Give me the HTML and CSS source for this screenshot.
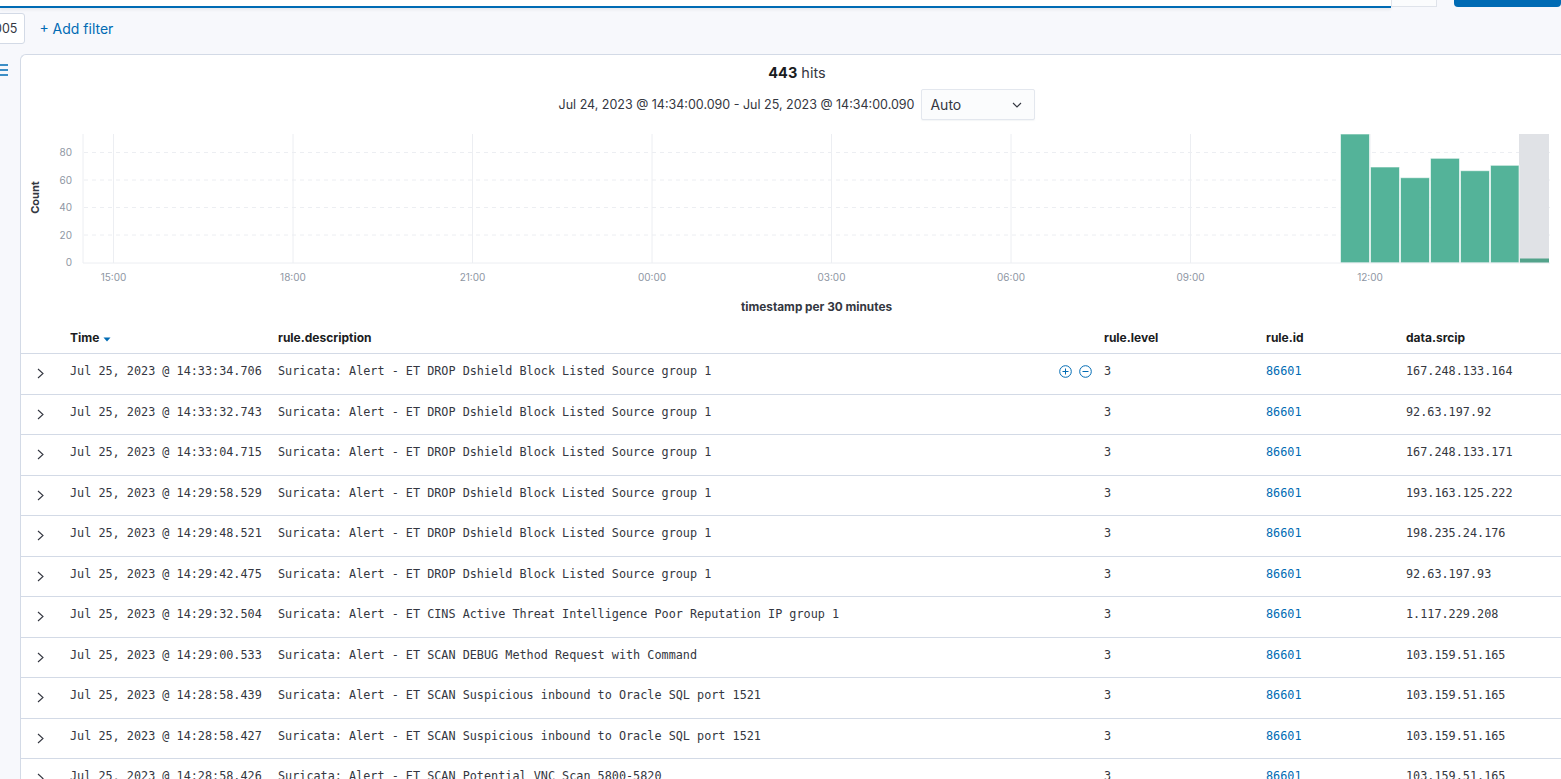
FILE: index.html
```html
<!DOCTYPE html>
<html lang="en">
<head>
<meta charset="utf-8">
<title>Discover</title>
<link rel="stylesheet" href="styles.css">
</head>
<body>
<div class="topbar">
  <div class="query"></div>
  <div class="qbtn"></div>
  <div class="update"></div>
</div>
<div class="filters">
  <span class="pill">005</span>
  <span class="add">+ Add filter</span>
</div>
<div class="main">
  <div class="gutter">
    <svg class="burger" width="8" height="12" viewBox="0 0 8 12"><path d="M0 1h8M0 6h8M0 11h8" stroke="#006bb4" stroke-width="1.3"/></svg>
  </div>
  <div class="panel">
    <div class="hits"><b>443</b> hits</div>
    <div class="range">
      <span class="range-text">Jul 24, 2023 @ 14:34:00.090 - Jul 25, 2023 @ 14:34:00.090</span>
      <div class="select"><span>Auto</span><svg width="10" height="6" viewBox="0 0 10 6"><path d="M1 1l4 4 4-4" fill="none" stroke="#343741" stroke-width="1.1"/></svg></div>
    </div>
    <svg class="chart" width="1552" height="200" viewBox="21 120 1552 200">
      <g stroke="#eceef2" stroke-width="1">
        <line x1="113.5" y1="134" x2="113.5" y2="263"/>
        <line x1="293" y1="134" x2="293" y2="263"/>
        <line x1="472.5" y1="134" x2="472.5" y2="263"/>
        <line x1="652" y1="134" x2="652" y2="263"/>
        <line x1="831.5" y1="134" x2="831.5" y2="263"/>
        <line x1="1011" y1="134" x2="1011" y2="263"/>
        <line x1="1190.5" y1="134" x2="1190.5" y2="263"/>
        <line x1="1370" y1="134" x2="1370" y2="263"/>
      </g>
      <g stroke="#eceef2" stroke-width="1" stroke-dasharray="4 4">
        <line x1="84" y1="152.5" x2="1550" y2="152.5"/>
        <line x1="84" y1="180" x2="1550" y2="180"/>
        <line x1="84" y1="207.5" x2="1550" y2="207.5"/>
        <line x1="84" y1="235" x2="1550" y2="235"/>
      </g>
      <line x1="83" y1="134" x2="83" y2="263" stroke="#eceef2"/>
      <rect x="1519" y="134" width="30" height="129" fill="#e0e2e6"/>
      <g fill="#54b399" stroke="#ffffff" stroke-opacity="0.6" stroke-width="1">
        <rect x="1340.5" y="134" width="29" height="129"/>
        <rect x="1370.5" y="167" width="29" height="96"/>
        <rect x="1400.5" y="177.7" width="29" height="85.3"/>
        <rect x="1430.5" y="158.3" width="29" height="104.7"/>
        <rect x="1460.5" y="170.7" width="29" height="92.3"/>
        <rect x="1490.5" y="165.3" width="28.5" height="97.7"/>
      </g>
      <rect x="1520" y="258.5" width="29" height="4.5" fill="#53a38b"/>
      <line x1="83" y1="263" x2="1550" y2="263" stroke="#eceef2"/>
      <g class="tick" text-anchor="end">
        <text x="72" y="156">80</text>
        <text x="72" y="183.5">60</text>
        <text x="72" y="211">40</text>
        <text x="72" y="238.5">20</text>
        <text x="72" y="266">0</text>
      </g>
      <g class="tick" text-anchor="middle">
        <text x="113.5" y="281">15:00</text>
        <text x="293" y="281">18:00</text>
        <text x="472.5" y="281">21:00</text>
        <text x="652" y="281">00:00</text>
        <text x="831.5" y="281">03:00</text>
        <text x="1011" y="281">06:00</text>
        <text x="1190.5" y="281">09:00</text>
        <text x="1370" y="281">12:00</text>
      </g>
      <text class="axis-title" x="39" y="197.5" text-anchor="middle" transform="rotate(-90 39 197.5)">Count</text>
      <text class="axis-title wide" x="816.5" y="311" text-anchor="middle">timestamp per 30 minutes</text>
    </svg>
    <div class="table">
      <div class="row head">
        <div class="cell"></div>
        <div class="cell">Time <svg class="sort" width="8" height="5" viewBox="0 0 8 5"><path d="M0.5 0.5h7L4 4.5z" fill="#006bb4"/></svg></div>
        <div class="cell">rule.description</div>
        <div class="cell">rule.level</div>
        <div class="cell">rule.id</div>
        <div class="cell">data.srcip</div>
      </div>
      <div class="row">
        <div class="cell toggle"><svg width="7" height="11" viewBox="0 0 7 11"><path d="M1 1l5 4.5L1 10" fill="none" stroke="#343741" stroke-width="1.1"/></svg></div>
        <div class="cell mono">Jul 25, 2023 @ 14:33:34.706</div>
        <div class="cell mono desc"><span>Suricata: Alert - ET DROP Dshield Block Listed Source group 1</span>
          <span class="actions">
            <svg width="13" height="13" viewBox="0 0 13 13"><circle cx="6.5" cy="6.5" r="5.8" fill="none" stroke="#006bb4" stroke-width="1"/><path d="M6.5 3.5v6M3.5 6.5h6" stroke="#006bb4" stroke-width="1"/></svg>
            <svg width="13" height="13" viewBox="0 0 13 13"><circle cx="6.5" cy="6.5" r="5.8" fill="none" stroke="#006bb4" stroke-width="1"/><path d="M3.5 6.5h6" stroke="#006bb4" stroke-width="1"/></svg>
          </span>
        </div>
        <div class="cell mono">3</div>
        <div class="cell mono link">86601</div>
        <div class="cell mono">167.248.133.164</div>
      </div>
      <div class="row">
        <div class="cell toggle"><svg width="7" height="11" viewBox="0 0 7 11"><path d="M1 1l5 4.5L1 10" fill="none" stroke="#343741" stroke-width="1.1"/></svg></div>
        <div class="cell mono">Jul 25, 2023 @ 14:33:32.743</div>
        <div class="cell mono">Suricata: Alert - ET DROP Dshield Block Listed Source group 1</div>
        <div class="cell mono">3</div>
        <div class="cell mono link">86601</div>
        <div class="cell mono">92.63.197.92</div>
      </div>
      <div class="row">
        <div class="cell toggle"><svg width="7" height="11" viewBox="0 0 7 11"><path d="M1 1l5 4.5L1 10" fill="none" stroke="#343741" stroke-width="1.1"/></svg></div>
        <div class="cell mono">Jul 25, 2023 @ 14:33:04.715</div>
        <div class="cell mono">Suricata: Alert - ET DROP Dshield Block Listed Source group 1</div>
        <div class="cell mono">3</div>
        <div class="cell mono link">86601</div>
        <div class="cell mono">167.248.133.171</div>
      </div>
      <div class="row">
        <div class="cell toggle"><svg width="7" height="11" viewBox="0 0 7 11"><path d="M1 1l5 4.5L1 10" fill="none" stroke="#343741" stroke-width="1.1"/></svg></div>
        <div class="cell mono">Jul 25, 2023 @ 14:29:58.529</div>
        <div class="cell mono">Suricata: Alert - ET DROP Dshield Block Listed Source group 1</div>
        <div class="cell mono">3</div>
        <div class="cell mono link">86601</div>
        <div class="cell mono">193.163.125.222</div>
      </div>
      <div class="row">
        <div class="cell toggle"><svg width="7" height="11" viewBox="0 0 7 11"><path d="M1 1l5 4.5L1 10" fill="none" stroke="#343741" stroke-width="1.1"/></svg></div>
        <div class="cell mono">Jul 25, 2023 @ 14:29:48.521</div>
        <div class="cell mono">Suricata: Alert - ET DROP Dshield Block Listed Source group 1</div>
        <div class="cell mono">3</div>
        <div class="cell mono link">86601</div>
        <div class="cell mono">198.235.24.176</div>
      </div>
      <div class="row">
        <div class="cell toggle"><svg width="7" height="11" viewBox="0 0 7 11"><path d="M1 1l5 4.5L1 10" fill="none" stroke="#343741" stroke-width="1.1"/></svg></div>
        <div class="cell mono">Jul 25, 2023 @ 14:29:42.475</div>
        <div class="cell mono">Suricata: Alert - ET DROP Dshield Block Listed Source group 1</div>
        <div class="cell mono">3</div>
        <div class="cell mono link">86601</div>
        <div class="cell mono">92.63.197.93</div>
      </div>
      <div class="row">
        <div class="cell toggle"><svg width="7" height="11" viewBox="0 0 7 11"><path d="M1 1l5 4.5L1 10" fill="none" stroke="#343741" stroke-width="1.1"/></svg></div>
        <div class="cell mono">Jul 25, 2023 @ 14:29:32.504</div>
        <div class="cell mono">Suricata: Alert - ET CINS Active Threat Intelligence Poor Reputation IP group 1</div>
        <div class="cell mono">3</div>
        <div class="cell mono link">86601</div>
        <div class="cell mono">1.117.229.208</div>
      </div>
      <div class="row">
        <div class="cell toggle"><svg width="7" height="11" viewBox="0 0 7 11"><path d="M1 1l5 4.5L1 10" fill="none" stroke="#343741" stroke-width="1.1"/></svg></div>
        <div class="cell mono">Jul 25, 2023 @ 14:29:00.533</div>
        <div class="cell mono">Suricata: Alert - ET SCAN DEBUG Method Request with Command</div>
        <div class="cell mono">3</div>
        <div class="cell mono link">86601</div>
        <div class="cell mono">103.159.51.165</div>
      </div>
      <div class="row">
        <div class="cell toggle"><svg width="7" height="11" viewBox="0 0 7 11"><path d="M1 1l5 4.5L1 10" fill="none" stroke="#343741" stroke-width="1.1"/></svg></div>
        <div class="cell mono">Jul 25, 2023 @ 14:28:58.439</div>
        <div class="cell mono">Suricata: Alert - ET SCAN Suspicious inbound to Oracle SQL port 1521</div>
        <div class="cell mono">3</div>
        <div class="cell mono link">86601</div>
        <div class="cell mono">103.159.51.165</div>
      </div>
      <div class="row">
        <div class="cell toggle"><svg width="7" height="11" viewBox="0 0 7 11"><path d="M1 1l5 4.5L1 10" fill="none" stroke="#343741" stroke-width="1.1"/></svg></div>
        <div class="cell mono">Jul 25, 2023 @ 14:28:58.427</div>
        <div class="cell mono">Suricata: Alert - ET SCAN Suspicious inbound to Oracle SQL port 1521</div>
        <div class="cell mono">3</div>
        <div class="cell mono link">86601</div>
        <div class="cell mono">103.159.51.165</div>
      </div>
      <div class="row">
        <div class="cell toggle"><svg width="7" height="11" viewBox="0 0 7 11"><path d="M1 1l5 4.5L1 10" fill="none" stroke="#343741" stroke-width="1.1"/></svg></div>
        <div class="cell mono">Jul 25, 2023 @ 14:28:58.426</div>
        <div class="cell mono">Suricata: Alert - ET SCAN Potential VNC Scan 5800-5820</div>
        <div class="cell mono">3</div>
        <div class="cell mono link">86601</div>
        <div class="cell mono">103.159.51.165</div>
      </div>
    </div>
  </div>
</div>
</body>
</html>
```
FILE: styles.css
```css
* { box-sizing: border-box; }
html, body {
  margin: 0;
  padding: 0;
  height: 779px;
  overflow: hidden;
}
body {
  background: #f7f8fc;
  font-family: Inter, "Noto Sans", "Liberation Sans", sans-serif;
  color: #343741;
}
.topbar {
  display: flex;
  height: 8px;
  align-items: flex-start;
}
.query {
  width: 1391px;
  height: 8px;
  background: #ffffff;
  border-bottom: 2px solid #006bb4;
  box-shadow: 0 2px 3px rgba(0, 0, 0, 0.06);
}
.qbtn {
  width: 46px;
  height: 7px;
  background: #fbfcfd;
  border: 1px solid #dfe3ea;
  border-top: none;
}
.update {
  flex: 1;
  margin-left: 17px;
  height: 7px;
  background: #006bb4;
  border-radius: 0 0 4px 4px;
}
.filters {
  display: flex;
  align-items: center;
  height: 46px;
  padding-top: 5px;
  padding-bottom: 10px;
}
.pill {
  display: flex;
  align-items: center;
  height: 31px;
  margin-left: -15px;
  padding: 0 7px 0 8px;
  background: #ffffff;
  border: 1px solid #d3dae6;
  border-radius: 3px;
  font-size: 12.5px;
  color: #343741;
}
.add {
  margin-left: 14px;
  font-size: 14px;
  color: #006bb4;
}
.main {
  display: flex;
}
.gutter {
  width: 20px;
  flex: none;
  padding-top: 10px;
}
.burger { display: block; }
.panel {
  flex: none;
  width: 1553px;
  background: #ffffff;
  border-top: 1px solid #d3dae6;
  border-left: 1px solid #d3dae6;
  border-top-left-radius: 6px;
  height: 760px;
}
.hits {
  text-align: center;
  padding-top: 8px;
  line-height: 20px;
  font-size: 14.5px;
  color: #343741;
}
.hits b { color: #1a1c21; font-weight: 700; }
.range {
  display: flex;
  justify-content: center;
  align-items: center;
  gap: 7px;
  margin-top: 6px;
}
.range-text {
  font-size: 12.5px;
  color: #343741;
}
.select {
  width: 114px;
  height: 31px;
  display: flex;
  align-items: center;
  justify-content: space-between;
  padding: 0 8px 0 8px;
  background: #fbfcfd;
  border: 1px solid #e3e7ee;
  border-radius: 2px;
  box-shadow: 0 1px 1px rgba(152, 162, 179, 0.1);
  font-size: 14px;
  color: #343741;
}
.select svg { margin-right: 4px; }
.chart { display: block; }
.tick text {
  font-family: Inter, "Noto Sans", sans-serif;
  font-size: 10px;
  fill: #8e96a3;
}
.axis-title {
  font-family: Inter, "Noto Sans", sans-serif;
  font-size: 11px;
  font-weight: 700;
  fill: #343741;
}
.axis-title.wide { font-size: 11.8px; }
.row {
  display: grid;
  grid-template-columns: 49px 208px 826px 162px 140px 1fr;
  align-items: start;
  border-bottom: 1px solid #d3dae6;
  height: 40.5px;
  padding-top: 9px;
}
.row.head {
  height: 34px;
  padding-top: 10px;
}
.cell {
  line-height: 16px;
  white-space: nowrap;
}
.head .cell {
  font-size: 12px;
  font-weight: 700;
  color: #1a1c21;
  display: flex;
  align-items: center;
}
.sort { margin-left: 4px; margin-top: 2px; }
.toggle {
  padding-left: 16px;
  padding-top: 5px;
}
.toggle svg { display: block; }
.mono {
  font-family: "DejaVu Sans Mono", "Liberation Mono", monospace;
  font-size: 11.8px;
  color: #343741;
}
.link { color: #006bb4; }
.desc {
  display: flex;
  justify-content: space-between;
  align-items: center;
  padding-right: 12px;
}
.actions {
  display: flex;
  align-items: center;
  gap: 7px;
}
.actions svg { display: block; }
```
